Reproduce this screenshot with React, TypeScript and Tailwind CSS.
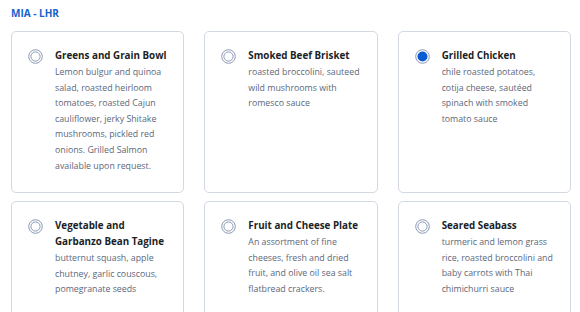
import * as React from "react";

type Meal = {
  id: string;
  name: string;
  description: string;
};

const meals: Meal[] = [
  {
    id: "greens",
    name: "Greens and Grain Bowl",
    description:
      "Lemon bulgur and quinoa salad, roasted heirloom tomatoes, roasted Cajun cauliflower, jerky Shitake mushrooms, pickled red onions. Grilled Salmon available upon request.",
  },
  {
    id: "brisket",
    name: "Smoked Beef Brisket",
    description: "roasted broccolini, sauteed wild mushrooms with romesco sauce",
  },
  {
    id: "chicken",
    name: "Grilled Chicken",
    description:
      "chile roasted potatoes, cotija cheese, sautéed spinach with smoked tomato sauce",
  },
  {
    id: "tagine",
    name: "Vegetable and Garbanzo Bean Tagine",
    description: "butternut squash, apple chutney, garlic couscous, pomegranate seeds",
  },
  {
    id: "fruit",
    name: "Fruit and Cheese Plate",
    description:
      "An assortment of fine cheeses, fresh and dried fruit, and olive oil sea salt flatbread crackers.",
  },
  {
    id: "seabass",
    name: "Seared Seabass",
    description:
      "turmeric and lemon grass rice, roasted broccolini and baby carrots with Thai chimichurri sauce",
  },
];

const Radio = ({ checked }: { checked: boolean }) => (
  <svg width="15" height="15" viewBox="0 0 15 15" className="shrink-0">
    <circle cx="7.5" cy="7.5" r="6.8" fill="white" stroke="#8a9ab4" strokeWidth="1" />
    {checked ? (
      <circle cx="7.5" cy="7.5" r="5" fill="#0b5bd3" />
    ) : (
      <circle cx="7.5" cy="7.5" r="4.6" fill="white" stroke="#8a9ab4" strokeWidth="1" />
    )}
  </svg>
);

const MealCard = ({
  meal,
  selected,
  onSelect,
}: {
  meal: Meal;
  selected: boolean;
  onSelect: (id: string) => void;
}) => (
  <button
    type="button"
    onClick={() => onSelect(meal.id)}
    className="flex items-start gap-[12px] rounded-[5px] border border-[#d3d9e2] bg-white pl-[16px] pr-[12px] pt-[16px] pb-[18px] text-left cursor-pointer"
  >
    <span className="mt-[1px]">
      <Radio checked={selected} />
    </span>
    <div className="flex flex-col gap-[1px]">
      <p className="text-[9.8px] leading-[16px] font-bold text-[#1b1f27]">{meal.name}</p>
      <p className="text-[8.8px] leading-[15.6px] text-[#5c677a]">{meal.description}</p>
    </div>
  </button>
);

export default function App() {
  const [mealID, setMealID] = React.useState<string>("chicken");

  return (
    <div
      className="w-[580px] h-[312px] overflow-hidden bg-white pl-[11px] pr-[9px] pt-[5px]"
      style={{ fontFamily: '"Open Sans", "Noto Sans", sans-serif' }}
    >
      <h2 className="text-[10px] leading-[16px] font-bold text-[#1462cc]">MIA - LHR</h2>
      <div className="mt-[10px] grid grid-cols-3 gap-x-[20px] gap-y-[8px]">
        {meals.map((meal) => (
          <MealCard
            key={meal.id}
            meal={meal}
            selected={mealID === meal.id}
            onSelect={setMealID}
          />
        ))}
      </div>
    </div>
  );
}
